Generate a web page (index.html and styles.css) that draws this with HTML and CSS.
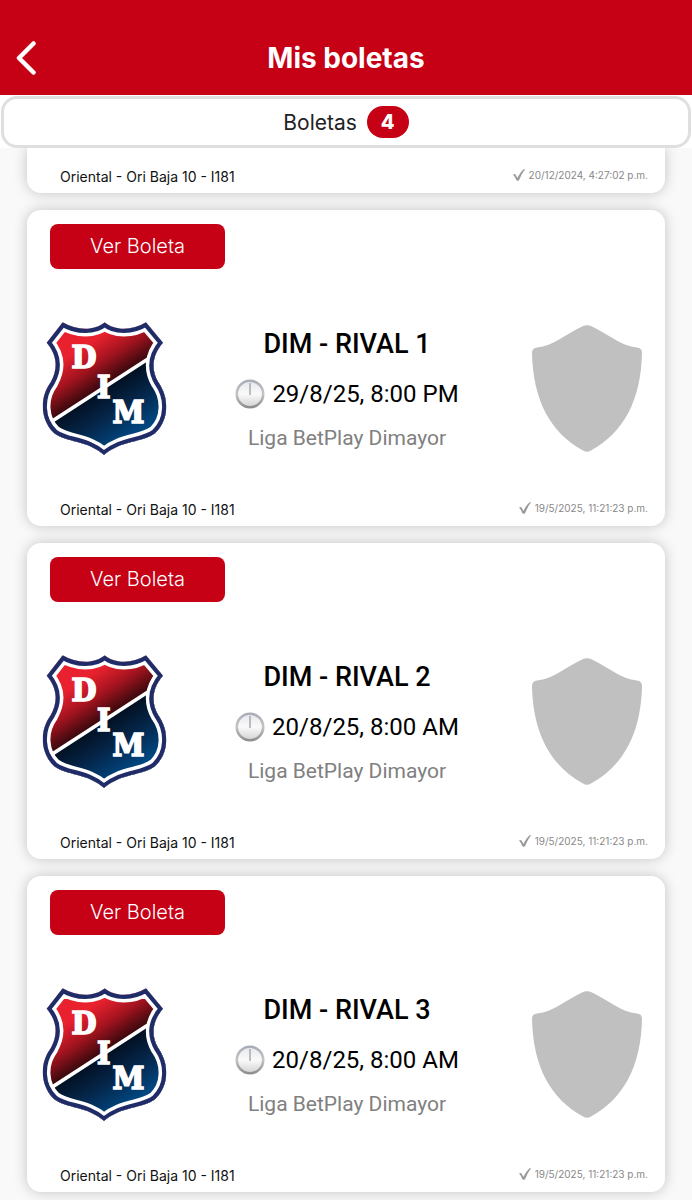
FILE: index.html
```html
<!DOCTYPE html>
<html lang="es">
<head>
<meta charset="utf-8">
<meta name="viewport" content="width=device-width, initial-scale=1">
<title>Mis boletas</title>
<link rel="stylesheet" href="styles.css">
</head>
<body>
<svg class="sprite" aria-hidden="true">
  <defs>
    <linearGradient id="red" gradientUnits="userSpaceOnUse" x1="120" y1="90" x2="220" y2="245">
      <stop offset="0.2" stop-color="#e9212f"/><stop offset="0.55" stop-color="#a5141f"/><stop offset="1" stop-color="#22060a"/>
    </linearGradient>
    <linearGradient id="blue" gradientUnits="userSpaceOnUse" x1="215" y1="235" x2="310" y2="385">
      <stop offset="0" stop-color="#020f20"/><stop offset="0.45" stop-color="#05264a"/><stop offset="1" stop-color="#004a86"/>
    </linearGradient>
    <linearGradient id="rim" x1="0" y1="0" x2="0" y2="1">
      <stop offset="0" stop-color="#a9adb8"/><stop offset="0.5" stop-color="#c4c4c6"/><stop offset="1" stop-color="#8e8e90"/>
    </linearGradient>
    <linearGradient id="face" x1="0" y1="0" x2="0" y2="1">
      <stop offset="0" stop-color="#e6e7ec"/><stop offset="0.5" stop-color="#fafafa"/><stop offset="1" stop-color="#d2d2d2"/>
    </linearGradient>
    <path id="crest-shape" d="M224 36C195 62 140 62 98 36L50 97C84 137 83 178 62 216C28 262 30 328 72 368C112 398 170 388 222 434C276 388 336 398 376 368C418 328 418 262 385 216C363 178 365 137 399 97L348 36C308 62 253 62 224 36Z"/>
    <clipPath id="crest-clip"><use href="#crest-shape"/></clipPath>
  </defs>
  <symbol id="crest" viewBox="36 32 378 405">
    <g clip-path="url(#crest-clip)">
      <rect x="36" y="32" width="378" height="405" fill="url(#red)"/>
      <path d="M36 352L414 107V437H36Z" fill="url(#blue)"/>
      <path d="M36 352L414 107" stroke="#fff" stroke-width="11"/>
      <use href="#crest-shape" fill="none" stroke="#fff" stroke-width="46"/>
      <use href="#crest-shape" fill="none" stroke="#202c68" stroke-width="25"/>
    </g>
    <g class="crest-letters" text-anchor="middle">
      <text x="162" y="172">D</text><text x="221" y="262">I</text><text x="295" y="339">M</text>
    </g>
  </symbol>
  <symbol id="shield" viewBox="0 0 110 127">
    <path d="M50 1.500Q55-1 60 1.500C76 9 89 21 105 22.500Q110 23 110 28C109 76 91 108 59 125.500Q55 128 51 125.500C19 108 1 76 0 28Q0 23 5 22.500C21 21 34 9 50 1.500Z" fill="#c0c0c0"/>
  </symbol>
  <symbol id="clock" viewBox="0 0 30 30">
    <circle cx="15" cy="15" r="13.200" fill="url(#face)" stroke="url(#rim)" stroke-width="2.600"/>
    <path d="M15 4V16" stroke="#a3a4a8" stroke-width="1.400"/>
  </symbol>
  <symbol id="check" viewBox="0 0 12 12">
    <path d="M0 5.500Q1.500 4.500 2.500 5.500L4.500 9C6 5.500 8 2.500 11 0L12 .5C9 4 7.500 8 6 11.200Q4.500 12.300 3.200 11C2.500 9 1.500 7 0 5.500Z" fill="#999"/>
  </symbol>
</svg>

<header class="topbar">
  <button class="back" type="button" aria-label="Volver">
    <svg viewBox="0 0 20 34" width="20" height="34"><path d="M17.500 2.500L3 17L17.500 31.500" fill="none" stroke="#fff" stroke-width="4.500" stroke-linecap="round" stroke-linejoin="round"/></svg>
  </button>
  <h1 class="title">Mis boletas</h1>
</header>

<nav class="tabs">
  <button class="tab" type="button">Boletas <span class="badge">4</span></button>
</nav>

<main class="tickets">
  <article class="card card-end">
    <footer class="card-foot"><span class="seat">Oriental - Ori Baja 10 - I181</span><span class="stamp"><svg class="check"><use href="#check"/></svg>20/12/2024, 4:27:02 p.m.</span></footer>
  </article>

  <article class="card">
    <button class="view" type="button">Ver Boleta</button>
    <div class="match">
      <svg class="crest" role="img" aria-label="DIM"><use href="#crest"/></svg>
      <div class="info">
        <h2 class="teams">DIM - RIVAL 1</h2>
        <p class="when"><svg class="clock"><use href="#clock"/></svg>29/8/25, 8:00 PM</p>
        <p class="league">Liga BetPlay Dimayor</p>
      </div>
      <svg class="shield" role="img" aria-label="Rival 1"><use href="#shield"/></svg>
    </div>
    <footer class="card-foot"><span class="seat">Oriental - Ori Baja 10 - I181</span><span class="stamp"><svg class="check"><use href="#check"/></svg>19/5/2025, 11:21:23 p.m.</span></footer>
  </article>

  <article class="card">
    <button class="view" type="button">Ver Boleta</button>
    <div class="match">
      <svg class="crest" role="img" aria-label="DIM"><use href="#crest"/></svg>
      <div class="info">
        <h2 class="teams">DIM - RIVAL 2</h2>
        <p class="when"><svg class="clock"><use href="#clock"/></svg>20/8/25, 8:00 AM</p>
        <p class="league">Liga BetPlay Dimayor</p>
      </div>
      <svg class="shield" role="img" aria-label="Rival 2"><use href="#shield"/></svg>
    </div>
    <footer class="card-foot"><span class="seat">Oriental - Ori Baja 10 - I181</span><span class="stamp"><svg class="check"><use href="#check"/></svg>19/5/2025, 11:21:23 p.m.</span></footer>
  </article>

  <article class="card">
    <button class="view" type="button">Ver Boleta</button>
    <div class="match">
      <svg class="crest" role="img" aria-label="DIM"><use href="#crest"/></svg>
      <div class="info">
        <h2 class="teams">DIM - RIVAL 3</h2>
        <p class="when"><svg class="clock"><use href="#clock"/></svg>20/8/25, 8:00 AM</p>
        <p class="league">Liga BetPlay Dimayor</p>
      </div>
      <svg class="shield" role="img" aria-label="Rival 3"><use href="#shield"/></svg>
    </div>
    <footer class="card-foot"><span class="seat">Oriental - Ori Baja 10 - I181</span><span class="stamp"><svg class="check"><use href="#check"/></svg>19/5/2025, 11:21:23 p.m.</span></footer>
  </article>
</main>
</body>
</html>
```
FILE: styles.css
```css
* { box-sizing: border-box; }

body {
  margin: 0;
  background: #f9f9f9;
  color: #111;
  font-family: Inter, Lato, sans-serif;
}

h1, h2, p { margin: 0; }
button { border: 0; padding: 0; font: inherit; cursor: pointer; }

.sprite { position: absolute; width: 0; height: 0; }

.crest-letters {
  fill: #fff;
  stroke: #fff;
  stroke-width: 5px;
  font: bold 96px "DejaVu Serif Condensed", "DejaVu Serif", serif;
}

.topbar {
  display: grid;
  grid-template-columns: 48px 1fr 48px;
  align-items: center;
  padding: 20px 0 0;
  min-height: 95px;
  background: #c60015;
  color: #fff;
}

.back {
  display: flex;
  padding-left: 16px;
  background: none;
}

.title {
  font-size: 28px;
  font-weight: 700;
  line-height: 32px;
  text-align: center;
}

.tabs { background: #fff; padding: 1px 1px 0; }

.tab {
  display: flex;
  width: 100%;
  height: 52px;
  align-items: center;
  justify-content: center;
  gap: 10px;
  border: 3px solid #dfdfdf;
  border-radius: 16px;
  background: #fff;
  color: #222;
  font-size: 21px;
}

.badge {
  padding: 0 14px;
  border-radius: 16px;
  background: #c60015;
  color: #fff;
  font-size: 20px;
  font-weight: 800;
  line-height: 32px;
}

.tickets {
  display: flex;
  flex-direction: column;
  gap: 17px;
  padding: 0 27px 8px;
  overflow: hidden;
}

.card {
  display: flex;
  flex-direction: column;
  align-items: flex-start;
  padding: 14px 0 7px;
  border-radius: 14px;
  background: #fff;
  box-shadow: 0 0 14px rgba(0, 0, 0, 0.22);
}

.card-end { padding-top: 20px; border-radius: 0 0 14px 14px; }

.view {
  width: 175px;
  height: 45px;
  margin-left: 23px;
  padding-bottom: 2px;
  border-radius: 8px;
  background: #c60015;
  color: #fff;
  font-size: 20px;
  font-weight: 300;
}

.match {
  display: grid;
  grid-template-columns: 126px 1fr 122px;
  align-items: center;
  align-self: stretch;
  padding: 50px 17px 44px 15px;
}

.crest { width: 126px; height: 135px; }
.shield { width: 110px; height: 127px; justify-self: center; }

.info { font-family: Roboto, sans-serif; text-align: center; color: #000; }

.teams { font-size: 27px; font-weight: 500; line-height: 50px; }

.when {
  display: flex;
  align-items: center;
  justify-content: center;
  gap: 7px;
  font-size: 24px;
  line-height: 50px;
}

.clock { width: 30px; height: 30px; }

.league { color: #808080; font-size: 21px; line-height: 38px; }

.card-foot {
  display: flex;
  align-self: stretch;
  align-items: center;
  justify-content: space-between;
  padding: 0 17px 0 33px;
}

.seat { font-size: 14px; line-height: 18px; }

.stamp {
  display: flex;
  align-items: center;
  gap: 4px;
  padding-bottom: 4px;
  color: #888;
  font-size: 10px;
  line-height: 14px;
}

.check { width: 12px; height: 12px; }
```
